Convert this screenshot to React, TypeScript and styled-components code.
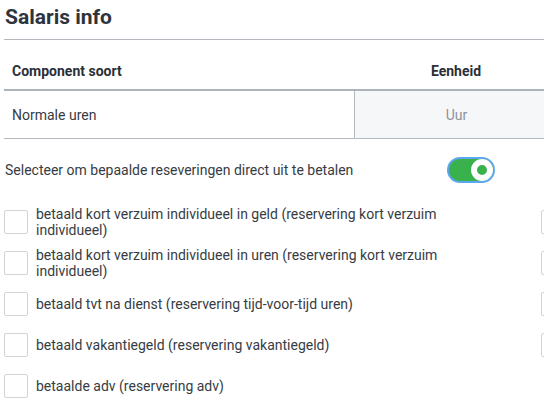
import styled, { createGlobalStyle } from "styled-components";

const GlobalStyle = createGlobalStyle`
  html, body {
    margin: 0;
    padding: 0;
    overflow: hidden;
    background: #fff;
  }
  body {
    font-family: Roboto, "Liberation Sans", Arial, sans-serif;
    color: #373c44;
  }
`;

const reservations = [
  { label: "betaald kort verzuim individueel in geld (reservering kort verzuim individueel)", input: true },
  { label: "betaald kort verzuim individueel in uren (reservering kort verzuim individueel)", input: true },
  { label: "betaald tvt na dienst (reservering tijd-voor-tijd uren)", input: true },
  { label: "betaald vakantiegeld (reservering vakantiegeld)", input: true },
  { label: "betaalde adv (reservering adv)", input: false },
];

const App = () => {
  return (
    <>
      <GlobalStyle />
      <Page>
        <Title>Salaris info</Title>
        <Table>
          <HeadCell>Component soort</HeadCell>
          <HeadCell $center>Eenheid</HeadCell>
          <Cell>Normale uren</Cell>
          <Cell $unit>Uur</Cell>
        </Table>
        <ToggleRow>
          <ToggleLabel>Selecteer om bepaalde reseveringen direct uit te betalen</ToggleLabel>
          <Toggle aria-checked="true" role="switch">
            <Knob />
          </Toggle>
        </ToggleRow>
        <List>
          {reservations.map((r) => (
            <Item key={r.label}>
              <Check />
              <ItemLabel>{r.label}</ItemLabel>
              {r.input && <AmountInput />}
            </Item>
          ))}
        </List>
      </Page>
    </>
  );
};

export default App;

const Page = styled.div`
  width: 640px;
  padding-left: 4px;
`;

const Title = styled.h1`
  margin: 0;
  padding: 5px 0 9px 1px;
  font-size: 21px;
  line-height: 25px;
  font-weight: 700;
  color: #2e343d;
  border-bottom: 1px solid #b3b8bf;
`;

const Table = styled.div`
  display: grid;
  grid-template-columns: 350px 204px;
`;

const HeadCell = styled.div<{ $center?: boolean }>`
  padding: 23px 8px 10px;
  font-size: 14px;
  line-height: 16px;
  font-weight: 700;
  color: #2b3038;
  text-align: ${({ $center }) => ($center ? "center" : "left")};
  border-bottom: 2px solid #adb3ba;
`;

const Cell = styled.div<{ $unit?: boolean }>`
  display: flex;
  align-items: center;
  justify-content: ${({ $unit }) => ($unit ? "center" : "flex-start")};
  height: 47px;
  padding: 0 8px;
  font-size: 14px;
  color: ${({ $unit }) => ($unit ? "#8d939b" : "#373c44")};
  background: ${({ $unit }) => ($unit ? "#f6f7f9" : "#fff")};
  border-bottom: 1px solid #b3b8bf;
  border-left: ${({ $unit }) => ($unit ? "1px solid #b3b8bf" : "none")};
`;

const ToggleRow = styled.div`
  display: flex;
  align-items: center;
  height: 62px;
  padding-left: 1px;
`;

const ToggleLabel = styled.div`
  flex: 0 0 442px;
  font-size: 14px;
  line-height: 16px;
`;

const Toggle = styled.div`
  position: relative;
  box-sizing: border-box;
  width: 48px;
  height: 26px;
  border-radius: 13px;
  background: #39b14d;
  border: 2px solid #5ea6ee;
`;

const Knob = styled.span`
  position: absolute;
  top: 0px;
  right: 0px;
  width: 22px;
  height: 22px;
  box-sizing: border-box;
  border-radius: 50%;
  background: #39b14d;
  border: 6px solid #fff;
`;

const List = styled.div`
  display: flex;
  flex-direction: column;
`;

const Item = styled.div`
  display: flex;
  align-items: center;
  min-height: 41px;
`;

const Check = styled.span`
  flex: 0 0 24px;
  box-sizing: border-box;
  height: 24px;
  border: 1px solid #d0d4d9;
  border-radius: 2px;
  background: #fff;
`;

const ItemLabel = styled.div`
  flex: 0 0 470px;
  margin-left: 8px;
  font-size: 14px;
  line-height: 16px;
`;

const AmountInput = styled.span`
  flex: 0 0 80px;
  box-sizing: border-box;
  margin-left: 35px;
  height: 24px;
  border: 1px solid #d0d4d9;
  border-radius: 2px;
`;
